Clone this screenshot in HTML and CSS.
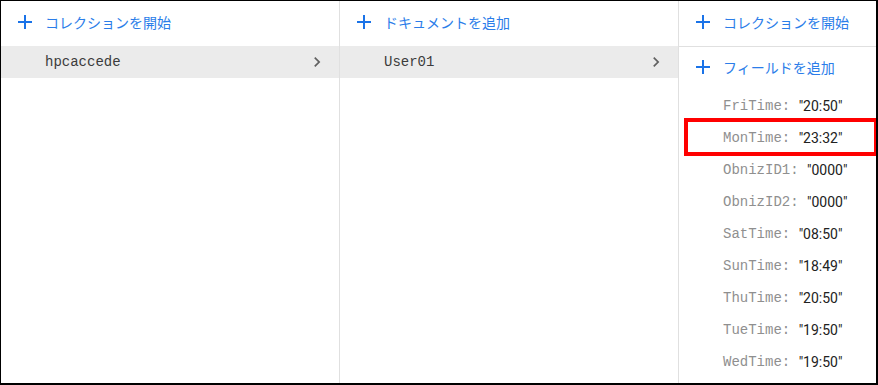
FILE: index.html
```html
<!doctype html>
<html lang="ja">
<head>
  <meta charset="UTF-8">
  <title>Firestore</title>
  <link rel="stylesheet" href="styles.css">
</head>
<body>
<div class="panel">
  <div class="column">
    <div class="col-header">
      <svg class="plus" viewBox="0 0 24 24"><path d="M19 13h-6v6h-2v-6H5v-2h6V5h2v6h6v2z"/></svg>
      <span>コレクションを開始</span>
    </div>
    <div class="item selected">
      <span>hpcaccede</span>
      <svg class="chevron" viewBox="0 0 24 24"><path d="M10 6L8.59 7.41 13.17 12l-4.58 4.59L10 18l6-6z"/></svg>
    </div>
  </div>
  <div class="column">
    <div class="col-header">
      <svg class="plus" viewBox="0 0 24 24"><path d="M19 13h-6v6h-2v-6H5v-2h6V5h2v6h6v2z"/></svg>
      <span>ドキュメントを追加</span>
    </div>
    <div class="item selected">
      <span>User01</span>
      <svg class="chevron" viewBox="0 0 24 24"><path d="M10 6L8.59 7.41 13.17 12l-4.58 4.59L10 18l6-6z"/></svg>
    </div>
  </div>
  <div class="column last">
    <div class="col-header divided">
      <svg class="plus" viewBox="0 0 24 24"><path d="M19 13h-6v6h-2v-6H5v-2h6V5h2v6h6v2z"/></svg>
      <span>コレクションを開始</span>
    </div>
    <div class="add-field">
      <svg class="plus" viewBox="0 0 24 24"><path d="M19 13h-6v6h-2v-6H5v-2h6V5h2v6h6v2z"/></svg>
      <span>フィールドを追加</span>
    </div>
    <div class="field"><span class="key">FriTime: </span><span class="value">"20:50"</span></div>
    <div class="field marked"><span class="key">MonTime: </span><span class="value">"23:32"</span></div>
    <div class="field"><span class="key">ObnizID1: </span><span class="value">"0000"</span></div>
    <div class="field"><span class="key">ObnizID2: </span><span class="value">"0000"</span></div>
    <div class="field"><span class="key">SatTime: </span><span class="value">"08:50"</span></div>
    <div class="field"><span class="key">SunTime: </span><span class="value">"18:49"</span></div>
    <div class="field"><span class="key">ThuTime: </span><span class="value">"20:50"</span></div>
    <div class="field"><span class="key">TueTime: </span><span class="value">"19:50"</span></div>
    <div class="field"><span class="key">WedTime: </span><span class="value">"19:50"</span></div>
  </div>
</div>
</body>
</html>
```

FILE: styles.css
```css
html, body { margin: 0; padding: 0; background: #fff; }
* { box-sizing: border-box; font-family: Roboto, "Noto Sans CJK JP", sans-serif; }
.panel { width: 878px; height: 385px; display: flex; border-style: solid; border-color: #000; border-width: 1px 2px 2px 1px; overflow: hidden; }
.column { width: 339px; border-right: 1px solid #e0e0e0; }
.column.last { flex: 1; border-right: 0; }
.col-header { height: 45px; display: flex; align-items: center; padding: 0 0 3px 12px; color: #2b7de9; font-size: 14px; }
.col-header.divided { height: 46px; border-bottom: 1px solid #e0e0e0; }
.plus { width: 24px; height: 24px; fill: #1a73e8; margin-right: 8px; flex: none; }
.item { height: 32px; display: flex; align-items: center; justify-content: space-between; padding: 0 12px 0 44px; }
.item span { font-family: "Liberation Mono", monospace; font-size: 14px; color: #3c3c3c; }
.item.selected { background: #ebebeb; }
.chevron { width: 20px; height: 20px; fill: #616161; }
.add-field { height: 43px; display: flex; align-items: center; padding: 0 0 3px 12px; color: #2b7de9; font-size: 14px; }
.field { height: 32px; display: flex; align-items: center; padding-left: 44px; font-size: 14px; white-space: pre; }
.key { font-family: "Liberation Mono", monospace; color: #8f8f8f; }
.value { color: #212121; }
.field.marked { position: relative; }
.field.marked::after { content: ""; position: absolute; left: 5px; right: -2px; top: -4px; bottom: -2px; border: 4px solid #f00; }
```
